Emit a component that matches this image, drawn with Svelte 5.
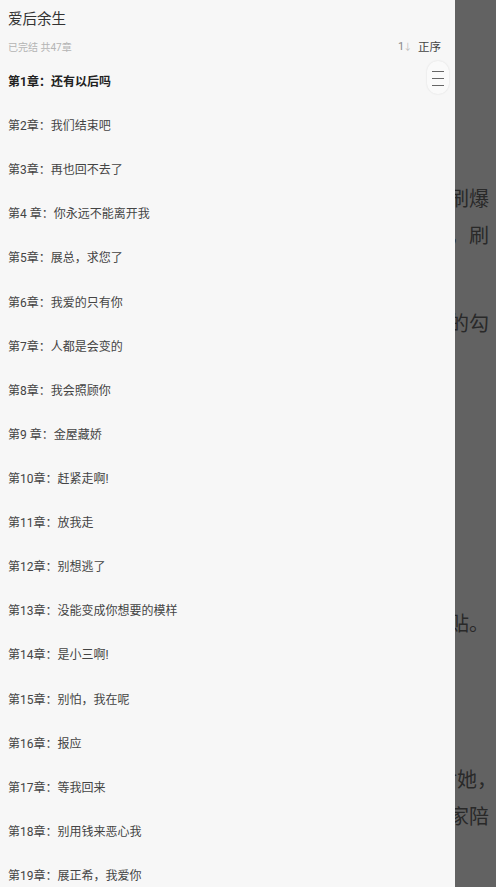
<script>
  const colon = '\uFF1A';
  const comma = '\uFF0C';
  const chapters = [
    ['第1章', '还有以后吗'],
    ['第2章', '我们结束吧'],
    ['第3章', '再也回不去了'],
    ['第4 章', '你永远不能离开我'],
    ['第5章', `展总${comma}求您了`],
    ['第6章', '我爱的只有你'],
    ['第7章', '人都是会变的'],
    ['第8章', '我会照顾你'],
    ['第9 章', '金屋藏娇'],
    ['第10章', '赶紧走啊!'],
    ['第11章', '放我走'],
    ['第12章', '别想逃了'],
    ['第13章', '没能变成你想要的模样'],
    ['第14章', '是小三啊!'],
    ['第15章', `别怕${comma}我在呢`],
    ['第16章', '报应'],
    ['第17章', '等我回来'],
    ['第18章', '别用钱来恶心我'],
    ['第19章', `展正希${comma}我爱你`]
  ];
</script>

<div class="page">
  <p class="p1">她的手机被刷爆<br />了{comma}刷<br />&nbsp;</p>
  <p class="p2">他的的勾</p>
  <p class="p3">很是体贴。</p>
  <p class="p4">他对她<span class="hang">{comma}</span><br />回家陪</p>
</div>

<div class="mask"></div>

<aside class="drawer">
  <h1>爱后余生</h1>
  <div class="meta">
    <span class="status">已完结 共47章</span>
    <span class="sort"><span class="sort-icon">1<i>↓</i></span>正序</span>
  </div>
  <ul>
    {#each chapters as [num, title], i}
      <li class:current={i === 0}>{num}{colon}{title}</li>
    {/each}
  </ul>
  <button class="float" aria-label="menu"><span></span><span></span><span></span></button>
</aside>

<style>
  :global(body) {
    margin: 0;
    font-family: Roboto, "Noto Sans CJK SC", sans-serif;
  }

  .page {
    position: relative;
    height: 887px;
    overflow: hidden;
    background: #f6f6f6;
    padding: 181px 7px 0 0;
    box-sizing: border-box;
    color: #666;
    font-size: 20px;
    line-height: 37px;
    text-align: right;
  }

  .page p {
    margin: 0;
  }

  .p2 { margin-top: 14px !important; }
  .p3 { margin-top: 263px !important; }
  .p4 { margin-top: 119px !important; }

  .hang {
    margin-right: -8px;
  }

  .mask {
    position: absolute;
    inset: 0;
    height: 887px;
    background: rgba(0, 0, 0, 0.6);
  }

  .drawer {
    position: absolute;
    top: 0;
    left: 0;
    width: 455px;
    height: 887px;
    overflow: hidden;
    background: #f7f7f7;
    color: #333;
  }

  h1 {
    margin: 0;
    padding: 10px 8px 0;
    font-size: 14.5px;
    font-weight: 400;
    line-height: 20px;
  }

  .meta {
    display: flex;
    justify-content: space-between;
    align-items: center;
    height: 18px;
    margin-top: 7px;
    padding: 0 14px 0 8px;
  }

  .status {
    font-size: 10px;
    color: #b4b4b4;
  }

  .sort {
    display: flex;
    align-items: center;
    gap: 8px;
    font-size: 11.5px;
    color: #444;
  }

  .sort-icon {
    font-size: 11px;
    color: #888;
    width: 12px;
    letter-spacing: -1px;
  }

  .sort-icon i {
    font-style: normal;
    font-size: 9px;
    color: #bbb;
  }

  ul {
    list-style: none;
    margin: 0;
    padding: 5px 8px 0;
  }

  li {
    height: 44.11px;
    line-height: 44px;
    font-size: 12px;
    color: #444;
    white-space: nowrap;
  }

  li.current {
    font-weight: 700;
    color: #222;
  }

  .float {
    position: absolute;
    top: 61px;
    left: 427px;
    width: 22px;
    height: 33px;
    padding: 1px 0 0;
    border: 0;
    border-radius: 11px;
    background: #fafafa;
    box-shadow: 0 0 2px rgba(0, 0, 0, 0.12);
    display: flex;
    flex-direction: column;
    align-items: center;
    justify-content: center;
    gap: 6px;
  }

  .float span {
    display: block;
    width: 12px;
    height: 1px;
    background: #666;
  }
</style>
